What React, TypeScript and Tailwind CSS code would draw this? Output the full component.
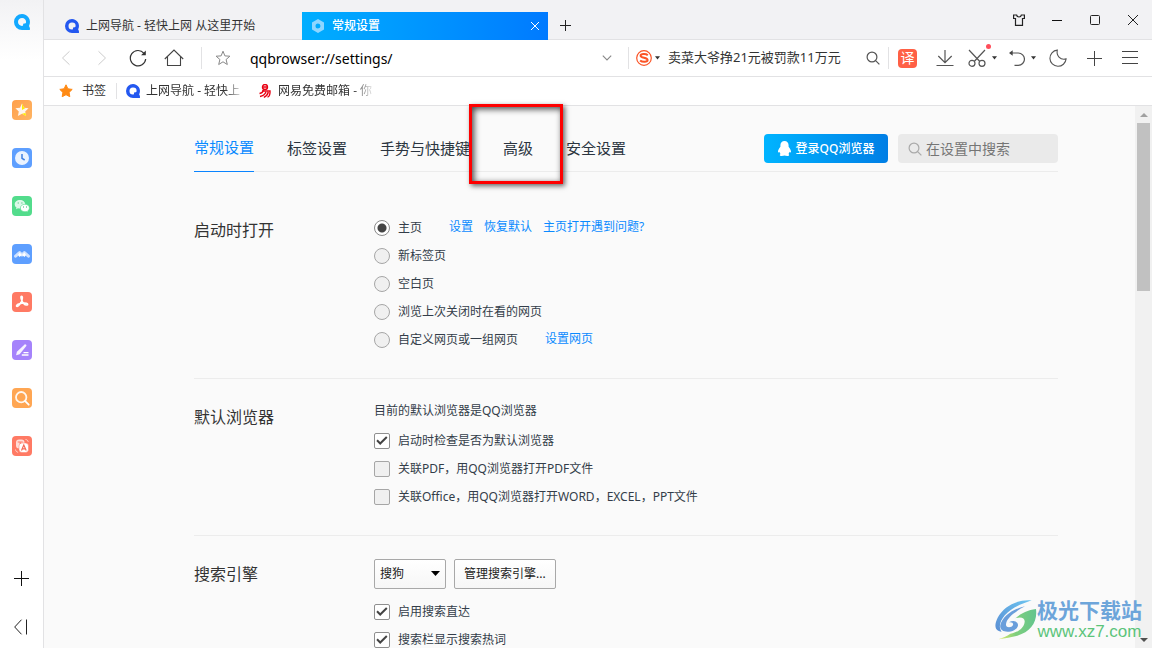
import React from "react";

const LINE = "bg-[#e2e2e4]";

function QLogo({ size, color }: { size: number; color: string }) {
  return (
    <svg width={size} height={size} viewBox="0 0 16 16" className="shrink-0" aria-hidden="true">
      <path
        fillRule="evenodd"
        fill={color}
        d="M8 0a8 8 0 0 1 7.2 11.4c-.2.5-.1.9.2 1.3.5.7.6 1.500.6 2.600 0 .4-.2.6-.6.6L8 16A8 8 0 0 1 8 0Zm.2 4A4 4 0 0 0 4 8a4 4 0 0 0 4.100 4c.9 0 1.100-.5 1-1.200-.1-.9.4-1.400 1.400-1.300.9.1 1.600-.5 1.600-1.500A3.900 3.900 0 0 0 8.200 4Z"
      />
    </svg>
  );
}

function Caret() {
  return (
    <svg width="5" height="4" viewBox="0 0 5 4" className="shrink-0" aria-hidden="true">
      <path d="M0 .3h5L2.500 3.600Z" fill="#333" />
    </svg>
  );
}

function Magnifier({ size, color }: { size: number; color: string }) {
  return (
    <svg width={size} height={size} viewBox="0 0 14 14" fill="none" stroke={color} strokeWidth="1.2" className="shrink-0" aria-hidden="true">
      <circle cx="6" cy="6" r="4.9" />
      <path d="m9.600 9.600 3.800 3.800" />
    </svg>
  );
}

const sideItems: { label: string; bg: string; art: React.ReactNode }[] = [
  {
    label: "收藏",
    bg: "bg-linear-to-br from-[#ff9f4a] to-[#ffb564]",
    art: (
      <>
        <path d="m10 3.500 2 4.200 4.600.6-3.400 3.100.9 4.600L10 13.700l-4.100 2.300.9-4.600L3.400 8.300l4.600-.6Z" fill="#fff" fillOpacity=".88" />
        <path d="m10 3.500 2 4.200 1.500.2L10 10Z" fill="#ffec00" />
        <path d="m10 13.700 4.100 2.300-.6-3Z" fill="#ffec00" />
      </>
    ),
  },
  {
    label: "历史",
    bg: "bg-[#5e9fff]",
    art: (
      <>
        <circle cx="10" cy="10" r="7" fill="#fff" fillOpacity=".88" />
        <path d="M10 6v4.300l2.700 1.700" fill="none" stroke="#3f7fe0" strokeWidth="1.500" />
      </>
    ),
  },
  {
    label: "微信",
    bg: "bg-[#53dc8c]",
    art: (
      <>
        <path d="M8 4C4.900 4 2.700 5.900 2.700 8.300c0 1.400.7 2.500 1.800 3.300L4 13.200l2-.9c.7.2 1.300.2 2 .2 3 0 5.300-1.900 5.300-4.200S11 4 8 4Z" fill="#fff" fillOpacity=".8" />
        <path d="M12.900 8.300c-2.600 0-4.500 1.600-4.500 3.700s1.900 3.700 4.500 3.700c.6 0 1.100-.1 1.600-.2l1.600.8-.4-1.400c1-.7 1.700-1.700 1.700-2.900 0-2.100-1.900-3.700-4.500-3.700Z" fill="#fff" stroke="#53dc8c" strokeWidth=".6" />
        <path d="M5.700 6.400h1v1h-1zM9.400 6.400h1v1h-1zM11 10.500h1v1h-1zM14 10.500h1v1h-1z" fill="#38b870" />
      </>
    ),
  },
  {
    label: "文档",
    bg: "bg-[#5e9fff]",
    art: (
      <>
        <path d="m3.600 12.200 4-3.700 2.400 2.500 2.400-2.500 4 3.700" fill="none" stroke="#fff" strokeOpacity=".7" strokeWidth="3" strokeLinecap="round" strokeLinejoin="round" />
        <path d="m7.600 8.500 2.400 2.500 2.400-2.500 1.600 2.500-1.500 2-2.500-2-2.500 2-1.500-2Z" fill="#fff" />
      </>
    ),
  },
  {
    label: "PDF",
    bg: "bg-[#ff7a64]",
    art: (
      <path
        d="M9.800 8.200C8.900 6.500 8.500 4.200 9.600 4.200s1 2.300.2 4.500c-.8 2.300-3 5.700-4.600 5.800-1.400 0-.7-2 2-2.700 2.400-.7 5.200-1.200 7.300-.6 1.700.5 1.500 2 0 1.900-1.800-.2-3.800-2.300-4.700-4.900Z"
        fill="none"
        stroke="#fff"
        strokeWidth="1.500"
      />
    ),
  },
  {
    label: "编辑",
    bg: "bg-[#a583fb]",
    art: (
      <>
        <path d="M12.600 4.400c.8-.6 2.300.7 1.700 1.700l-6.700 8.100-3.500 1 .8-3.400Z" fill="#fff" fillOpacity=".9" />
        <path d="M11.500 12.700h5M9.800 15h6.700" stroke="#fff" strokeWidth="1.300" />
      </>
    ),
  },
  {
    label: "搜索",
    bg: "bg-[#ffa653]",
    art: (
      <>
        <circle cx="9.200" cy="9.200" r="5.200" fill="none" stroke="#fff" strokeOpacity=".9" strokeWidth="1.800" />
        <path d="m13.200 13.200 3.500 3.500" stroke="#fff" strokeWidth="1.800" strokeLinecap="round" />
      </>
    ),
  },
  {
    label: "翻译",
    bg: "bg-[#ff7a64]",
    art: (
      <>
        <rect x="4" y="3.500" width="8.500" height="9" rx="3" fill="#fff" fillOpacity=".75" />
        <rect x="7" y="7" width="9.500" height="9.500" rx="3" fill="#fff" stroke="#ff7a64" strokeWidth=".5" />
        <path d="m9.500 14.500 2.300-5.500 2.400 5.500M10.300 12.900h3" fill="none" stroke="#f56a55" strokeWidth="1.200" />
        <path d="M5.700 6h5M8.200 6v2" stroke="#ff7a64" strokeWidth="1" />
        <path d="M13.500 3.500c1.500.1 2.500 1 2.700 2.400M3.500 13.500c.2 1.600 1 2.500 2.600 2.800" fill="none" stroke="#fff" strokeOpacity=".7" strokeWidth=".9" />
      </>
    ),
  },
];

function Sidebar() {
  return (
    <nav aria-label="侧边栏" className="flex w-11 shrink-0 flex-col items-center border-r border-[#e2e2e4] bg-[linear-gradient(#f2f2f4,#ffffff_60px)] pt-3.5 pb-[13px]">
      <a href="#home" aria-label="主页" className="mb-[70px] block">
        <QLogo size={16} color="#13a9ff" />
      </a>
      <div className="flex flex-col gap-7">
        {sideItems.map((item) => (
          <button key={item.label} type="button" aria-label={item.label} className={`size-5 overflow-hidden rounded ${item.bg}`}>
            <svg width="20" height="20" viewBox="0 0 20 20" aria-hidden="true">
              {item.art}
            </svg>
          </button>
        ))}
      </div>
      <div className="mt-auto flex flex-col items-center gap-[33px]">
        <button type="button" aria-label="添加">
          <svg width="16" height="16" viewBox="0 0 16 16" fill="none" stroke="#111" aria-hidden="true">
            <path d="M0 8.500h15M7.500 1v15" />
          </svg>
        </button>
        <button type="button" aria-label="收起">
          <svg width="16" height="16" viewBox="0 0 16 16" fill="none" stroke="#222" aria-hidden="true">
            <path d="M7.500.7.700 8l6.800 7.300M12.500.5v15" />
          </svg>
        </button>
      </div>
    </nav>
  );
}

function TitleBar() {
  return (
    <header className="flex h-10 shrink-0 items-stretch border-b border-[#e2e2e4] bg-[#f2f2f4] text-xs text-[#333]">
      <button type="button" className="mt-3 -mb-px flex w-[258px] items-center gap-[7px] pl-[21px]">
        <QLogo size={14} color="#2458f0" />
        <span>上网导航 - 轻快上网 从这里开始</span>
      </button>
      <div className="mt-3 -mb-px flex w-[246px] items-center bg-linear-to-r from-[#00aeff] to-[#007aff] pr-2 pl-[9px] text-white">
        <svg width="14" height="14" viewBox="0 0 14 14" className="mr-[7px]" aria-hidden="true">
          <path fillRule="evenodd" fill="#8fd6ff" d="m7 0 6 3.400v7.200L7 14l-6-3.400V3.400Zm0 4.500a2.500 2.500 0 1 0 0 5 2.500 2.500 0 0 0 0-5Z" />
        </svg>
        <span className="flex-1 font-medium">常规设置</span>
        <button type="button" aria-label="关闭标签页">
          <svg width="10" height="10" viewBox="0 0 10 10" stroke="#fff" aria-hidden="true">
            <path d="m1 1 8 8M9 1 1 9" />
          </svg>
        </button>
      </div>
      <button type="button" aria-label="新建标签页" className="mt-3 flex w-[35px] items-center justify-center">
        <svg width="12" height="12" viewBox="0 0 12 12" stroke="#222" aria-hidden="true">
          <path d="M0 5.500h11M5.500 0v11" />
        </svg>
      </button>
      <div className="ml-auto flex text-[#222]">
        <button type="button" aria-label="皮肤" className="flex w-[38px] items-center justify-center">
          <svg width="12" height="12" viewBox="0 0 12 12" fill="none" stroke="#222" strokeWidth="1.200" aria-hidden="true">
            <path d="M.6 1h3c.3 1.300 1.100 2 2.400 2s2.100-.7 2.400-2h3v3.500H9.500V11.400h-7V4.500H.6Z" />
          </svg>
        </button>
        <button type="button" aria-label="最小化" className="flex w-[38px] items-center justify-center">
          <svg width="10" height="10" viewBox="0 0 10 10" stroke="#111" aria-hidden="true">
            <path d="M0 5.500h10" />
          </svg>
        </button>
        <button type="button" aria-label="最大化" className="flex w-[38px] items-center justify-center">
          <svg width="10" height="10" viewBox="0 0 10 10" fill="none" stroke="#222" aria-hidden="true">
            <rect x=".5" y=".5" width="9" height="9" rx="1" />
          </svg>
        </button>
        <button type="button" aria-label="关闭" className="flex w-[38px] items-center justify-center">
          <svg width="10" height="10" viewBox="0 0 10 10" stroke="#222" aria-hidden="true">
            <path d="m0 0 10 10M10 0 0 10" />
          </svg>
        </button>
      </div>
    </header>
  );
}

function ToolButton({ label, width, children }: { label: string; width: string; children: React.ReactNode }) {
  return (
    <button type="button" aria-label={label} className={`flex h-full shrink-0 items-center justify-center ${width}`}>
      {children}
    </button>
  );
}

function Toolbar() {
  return (
    <div className="flex h-[37px] shrink-0 items-center border-b border-[#e2e2e4] bg-white pr-1 pl-1">
      <ToolButton label="后退" width="w-9">
        <svg width="10" height="16" viewBox="0 0 10 16" fill="none" stroke="#ccc" aria-hidden="true">
          <path d="M8.500 1.300 1.500 8l7 6.700" />
        </svg>
      </ToolButton>
      <ToolButton label="前进" width="w-9">
        <svg width="10" height="16" viewBox="0 0 10 16" fill="none" stroke="#ccc" aria-hidden="true">
          <path d="m1.500 1.300 7 6.700-7 6.700" />
        </svg>
      </ToolButton>
      <ToolButton label="刷新" width="w-9">
        <svg width="18" height="18" viewBox="0 0 18 18" fill="none" stroke="#333" strokeWidth="1.200" aria-hidden="true">
          <path d="M16.700 10A7.700 7.700 0 1 1 15 4.300" />
          <path d="M16.800 1.500v4.700h-4.700Z" fill="#333" stroke="none" />
        </svg>
      </ToolButton>
      <ToolButton label="主页" width="w-9">
        <svg width="20" height="18" viewBox="0 0 20 18" fill="none" stroke="#444" strokeWidth="1.100" aria-hidden="true">
          <path d="M.8 10 10 1l9.200 9M3.500 7.800v8.700h13V7.800" />
        </svg>
      </ToolButton>
      <span className={`ml-[9px] h-[22px] w-px shrink-0 ${LINE}`} />
      <ToolButton label="收藏此页" width="w-[42px]">
        <svg width="16" height="16" viewBox="0 0 16 16" fill="none" stroke="#888" aria-hidden="true">
          <path d="m8 1.200 1.900 4.700 5 .3-3.800 3.300 1.200 5L8 11.800l-4.300 2.700 1.200-5L1.100 6.200l5-.3Z" />
        </svg>
      </ToolButton>
      <input aria-label="地址" defaultValue="qqbrowser://settings/" className="ml-1.5 h-full min-w-0 flex-1 bg-transparent text-sm text-black outline-none" />
      <ToolButton label="展开地址栏" width="w-[42px]">
        <svg width="10" height="6" viewBox="0 0 10 6" fill="none" stroke="#888" strokeWidth="1.100" aria-hidden="true">
          <path d="m.8.7 4.200 4.200L9.200.7" />
        </svg>
      </ToolButton>
      <span className={`h-[22px] w-px shrink-0 ${LINE}`} />
      <div className="flex w-[259px] shrink-0 items-center pl-[7px]">
        <button type="button" aria-label="切换搜索引擎" className="mr-2 flex items-center gap-[3px]">
          <svg width="16" height="16" viewBox="0 0 16 16" fill="none" stroke="#fb5426" aria-hidden="true">
            <circle cx="8" cy="8" r="7.300" strokeWidth="1.200" />
            <path d="M11.800 5.200C10 3.700 4.600 3.600 4.600 5.800c0 2.400 7 1.600 7 4.200 0 2.300-5.500 2.300-7.500.5" strokeWidth="2" />
          </svg>
          <Caret />
        </button>
        <input aria-label="搜索热词" defaultValue="卖菜大爷挣21元被罚款11万元" className="min-w-0 flex-1 bg-transparent text-[13px] text-[#333] outline-none" />
        <button type="button" aria-label="搜索" className="mr-2">
          <Magnifier size={14} color="#555" />
        </button>
      </div>
      <span className={`h-[22px] w-px shrink-0 ${LINE}`} />
      <ToolButton label="翻译" width="w-[37px]">
        <span className="flex size-[19px] items-center justify-center rounded bg-[#ff6045] text-sm leading-none text-white">译</span>
      </ToolButton>
      <ToolButton label="下载" width="w-[37px]">
        <svg width="18" height="18" viewBox="0 0 18 18" fill="none" stroke="#555" strokeWidth="1.200" aria-hidden="true">
          <path d="M9 1v12.500M2.300 7 9 13.600 15.700 7M.5 16.500h17" />
        </svg>
      </ToolButton>
      <div className="relative h-full">
        <ToolButton label="截图" width="w-[38px] gap-1.5">
          <svg width="18" height="18" viewBox="0 0 18 18" fill="none" stroke="#555" strokeWidth="1.200" aria-hidden="true">
            <path d="m1 1 10.800 11.500M17 1 6.200 12.500" />
            <circle cx="4" cy="14.300" r="3" />
            <circle cx="14" cy="14.300" r="3" />
          </svg>
          <Caret />
        </ToolButton>
        <span className="absolute top-1 right-[10px] size-[5px] rounded-full bg-[#ff4d5a]" />
      </div>
      <ToolButton label="恢复关闭的标签页" width="w-[38px] gap-1.5 pl-1">
        <svg width="16" height="16" viewBox="0 0 16 16" fill="none" stroke="#555" strokeWidth="1.200" aria-hidden="true">
          <path d="M2 3h7.300a6.100 6.100 0 0 1 0 12.300H5.500" />
          <path d="M0 3 3.700.2v5.600Z" fill="#444" stroke="none" />
        </svg>
        <Caret />
      </ToolButton>
      <ToolButton label="夜间模式" width="w-[37px]">
        <svg width="18" height="18" viewBox="0 0 18 18" fill="none" stroke="#555" strokeWidth="1.100" aria-hidden="true">
          <path d="M8.300 1.100c-1.200 5.300 2.800 10.300 8.800 8.800A8.100 8.100 0 1 1 8.300 1.100Z" />
        </svg>
      </ToolButton>
      <ToolButton label="添加扩展" width="w-[37px]">
        <svg width="15" height="15" viewBox="0 0 15 15" stroke="#444" aria-hidden="true">
          <path d="M0 7.500h15M7.500 0v15" />
        </svg>
      </ToolButton>
      <ToolButton label="菜单" width="w-[35px]">
        <svg width="17" height="14" viewBox="0 0 17 14" stroke="#444" aria-hidden="true">
          <path d="M0 .5h16M0 6.500h16M0 12.500h16" />
        </svg>
      </ToolButton>
    </div>
  );
}

function Bookmarks() {
  return (
    <div className="flex h-[29px] shrink-0 items-center border-b border-[#e2e2e4] bg-white pl-[15px] text-xs text-[#333]">
      <a href="#bookmarks" className="flex items-center gap-[9px]">
        <svg width="14" height="14" viewBox="0 0 14 14" aria-hidden="true">
          <path d="m7 .8 1.900 4 4.300.6-3.100 3 .7 4.300L7 10.700l-3.800 2 .7-4.300-3.100-3 4.300-.6Z" fill="#ff8a14" stroke="#ff8a14" strokeLinejoin="round" />
        </svg>
        书签
      </a>
      <span className={`ml-2.5 h-4 w-px ${LINE}`} />
      <a href="#nav" className="ml-[9px] flex items-center gap-1.5">
        <QLogo size={14} color="#2458f0" />
        <span className="w-[98px] whitespace-nowrap [mask-image:linear-gradient(to_right,#000_80%,transparent)]">上网导航 - 轻快上</span>
      </a>
      <a href="#mail" className="ml-3.5 flex items-center gap-1.5">
        <svg width="14" height="14" viewBox="0 0 14 14" fill="none" stroke="#e80012" strokeWidth="1.400" aria-hidden="true">
          <circle cx="7" cy="3" r="2.500" />
          <path d="M4.500 3h5M4 7h8c.2 3-.6 6-2.500 6M5.500 6C5 8 3.500 9.200 1.500 9.500M8 8c-1 2.300-3 4-6 4.500M10.300 8c-.5 2.300-2 4.300-4.500 5.300" />
        </svg>
        <span className="w-[98px] whitespace-nowrap [mask-image:linear-gradient(to_right,#000_75%,transparent)]">网易免费邮箱 - 你</span>
      </a>
    </div>
  );
}

function SettingsHeader() {
  const tab = "relative flex h-full items-center pb-3 whitespace-nowrap";
  return (
    <div className="flex h-[66px] items-end justify-between border-b border-[#ececec] pt-7">
      <nav aria-label="设置分类" className="-mb-px flex h-full gap-[33px] text-[15px] text-[#2b3540]">
        <a href="#general" aria-current="page" className={`${tab} border-b border-[#0a84ff] text-[#0a8aff]`}>常规设置</a>
        <a href="#tabs" className={tab}>标签设置</a>
        <a href="#gestures" className={tab}>手势与快捷键</a>
        <a href="#advanced" className={tab}>
          高级
          <span className="pointer-events-none absolute -top-[31px] -left-[34px] h-20 w-[94px] border-3 border-[#fe0000] shadow-[2px_2px_5px_#0009,inset_2px_2px_6px_#000b]" />
        </a>
        <a href="#security" className={tab}>安全设置</a>
      </nav>
      <div className="mb-2 flex gap-2.5">
        <button type="button" className="flex h-[29px] w-31 items-center justify-center gap-[5px] rounded bg-linear-to-r from-[#00b4ff] to-[#007ee5] text-xs font-medium text-white">
          <svg width="13" height="15" viewBox="0 0 13 15" fill="#fff" aria-hidden="true">
            <path d="M6.500 0C4 0 2.400 1.800 2.400 4.200v1.500C1.100 7.200 0 9 0 10.700c0 1 .6 1.200 1.400.1.200.8.6 1.500 1.200 2.100-1 .4-1.300 2.100 1 2.100 1.300 0 2.200-.1 2.900-.4.700.3 1.600.4 2.900.4 2.300 0 2-1.700 1-2.100.6-.6 1-1.300 1.200-2.100.8 1.100 1.400.9 1.400-.1 0-1.700-1.100-3.500-2.400-5V4.200C10.600 1.800 9 0 6.500 0Z" />
          </svg>
          登录QQ浏览器
        </button>
        <label className="flex h-[29px] w-40 items-center gap-1 rounded bg-[#eaeaea] pl-2.5">
          <Magnifier size={14} color="#aaa" />
          <input type="search" aria-label="在设置中搜索" placeholder="在设置中搜索" className="min-w-0 flex-1 bg-transparent text-sm outline-none placeholder:text-[#757575]" />
        </label>
      </div>
    </div>
  );
}

function Section({ title, children, first }: { title: string; children: React.ReactNode; first?: boolean }) {
  return (
    <section className={`flex border-b border-[#ececec] pb-6 ${first ? "pt-5" : ""}`}>
      <h2 className="w-[180px] shrink-0 pt-[26px] text-base leading-6 text-[#333]">{title}</h2>
      <div className="flex-1">{children}</div>
    </section>
  );
}

function Radio({ label, checked, children }: { label: string; checked?: boolean; children?: React.ReactNode }) {
  return (
    <div className="flex h-7 items-center">
      <label className="flex items-center gap-2">
        <input
          type="radio"
          name="startup"
          defaultChecked={checked}
          className="size-4 appearance-none rounded-full border border-[#a6a6a6] bg-[#f0f0f0] checked:border-[#8a8a8a] checked:bg-[radial-gradient(circle,#444_4px,#fff_5px)]"
        />
        {label}
      </label>
      {children && <span className="ml-[27px] flex gap-[11px] pb-0.5 text-[#0a8aff]">{children}</span>}
    </div>
  );
}

function Check({ label, checked }: { label: string; checked?: boolean }) {
  return (
    <label className="flex h-7 items-center gap-2">
      <span className="relative flex">
        <input type="checkbox" defaultChecked={checked} className="peer size-4 appearance-none rounded-xs border border-[#a6a6a6] bg-[#f0f0f0] checked:border-[#8f8f8f] checked:bg-white" />
        <svg width="16" height="16" viewBox="0 0 16 16" fill="none" stroke="#444" strokeWidth="2" className="pointer-events-none absolute inset-0 hidden peer-checked:block" aria-hidden="true">
          <path d="m3 7.300 3.200 3.200L12.800 4" />
        </svg>
      </span>
      {label}
    </label>
  );
}

function ScrollBar() {
  return (
    <div className="flex w-[17px] shrink-0 flex-col items-center bg-[#f1f1f1] pt-[7px] pb-1.5" aria-hidden="true">
      <svg width="8" height="4" viewBox="0 0 8 4">
        <path d="M0 4h8L4 0Z" fill="#a0a0a0" />
      </svg>
      <div className="mt-1.5 h-[168px] w-[13px] bg-[#c1c1c1]" />
      <svg width="8" height="4" viewBox="0 0 8 4" className="mt-auto">
        <path d="M0 0h8L4 4Z" fill="#505050" />
      </svg>
    </div>
  );
}

function Watermark() {
  return (
    <div className="pointer-events-none absolute right-2.5 bottom-1.5 flex items-center">
      <svg width="42" height="40" viewBox="38 55 126 120" aria-hidden="true">
        <defs>
          <linearGradient id="sky" x1="0" y1="1" x2="1" y2="0">
            <stop offset="0" stopColor="#5b8fd4" />
            <stop offset="1" stopColor="#6cc4f0" />
          </linearGradient>
          <linearGradient id="leaf" x1="0" y1="0" x2="1" y2="0">
            <stop offset="0" stopColor="#e4ec6a" />
            <stop offset=".45" stopColor="#80cf7c" />
            <stop offset="1" stopColor="#62c48e" />
          </linearGradient>
        </defs>
        <path d="M148 56C106 52 64 74 46 108c-12 24-8 40 12 42-10-12-6-32 10-50 22-24 52-34 80-44Z" fill="url(#sky)" />
        <path d="M128 74C94 80 60 104 54 130c-3 14 10 22 26 20 20-2 32-16 25-26-5-8-16-8-25-2 8-2 14 2 12 8-3 8-20 10-21 0-1-20 27-40 57-56Z" fill="#6a9edb" />
        <path d="M161 82c5 40-16 68-56 80-18 5-36 7-57 11 12-5 26-9 36-17 26-4 42-20 43-36 1-12-12-16-28-10 16-14 38-26 62-28Z" fill="url(#leaf)" />
      </svg>
      <div className="flex flex-col text-center">
        <span className="text-[21px] leading-6 font-bold text-[#6da5da]">极光下载站</span>
        <span className="font-['Liberation_Sans'] text-[17px] leading-5 text-[#5cc47a]">www.xz7.com</span>
      </div>
    </div>
  );
}

export default function App() {
  return (
    <div className="relative flex h-screen overflow-hidden bg-white font-['Noto_Sans','Noto_Sans_CJK_SC',sans-serif]">
      <Sidebar />
      <div className="flex min-h-0 min-w-0 flex-1 flex-col">
        <TitleBar />
        <Toolbar />
        <Bookmarks />
        <div className="flex min-h-0 flex-1 bg-[#fafafa]">
          <main className="min-w-0 flex-1 pr-[77px] pl-[150px] text-xs text-[#333d49]">
            <SettingsHeader />
            <Section title="启动时打开" first>
              <div className="pt-[22px]">
                <Radio label="主页" checked>
                  <a href="#set-home">设置</a>
                  <a href="#restore">恢复默认</a>
                  <a href="#help">主页打开遇到问题?</a>
                </Radio>
                <Radio label="新标签页" />
                <Radio label="空白页" />
                <Radio label="浏览上次关闭时在看的网页" />
                <Radio label="自定义网页或一组网页">
                  <a href="#set-pages">设置网页</a>
                </Radio>
              </div>
            </Section>
            <Section title="默认浏览器">
              <div className="pt-4">
                <p className="flex h-8 items-center">目前的默认浏览器是QQ浏览器</p>
                <Check label="启动时检查是否为默认浏览器" checked />
                <Check label="关联PDF，用QQ浏览器打开PDF文件" />
                <Check label="关联Office，用QQ浏览器打开WORD，EXCEL，PPT文件" />
              </div>
            </Section>
            <Section title="搜索引擎">
              <div className="flex gap-2 pt-[23px] pb-[9px]">
                <span className="relative flex">
                  <select aria-label="搜索引擎" className="h-[30px] w-18 appearance-none rounded-xs border border-[#a8a8a8] bg-linear-to-b from-white to-[#f6f6f6] pl-[5px] text-[#222]">
                    <option>搜狗</option>
                  </select>
                  <svg width="9" height="5" viewBox="0 0 9 5" className="pointer-events-none absolute top-3 right-1.5" aria-hidden="true">
                    <path d="M0 0h9L4.500 5Z" fill="#000" />
                  </svg>
                </span>
                <button type="button" className="h-[30px] rounded-xs border border-[#a8a8a8] bg-linear-to-b from-white to-[#f6f6f6] px-[9px] text-[#222]">
                  管理搜索引擎...
                </button>
              </div>
              <Check label="启用搜索直达" checked />
              <Check label="搜索栏显示搜索热词" checked />
            </Section>
          </main>
          <ScrollBar />
        </div>
      </div>
      <Watermark />
    </div>
  );
}
